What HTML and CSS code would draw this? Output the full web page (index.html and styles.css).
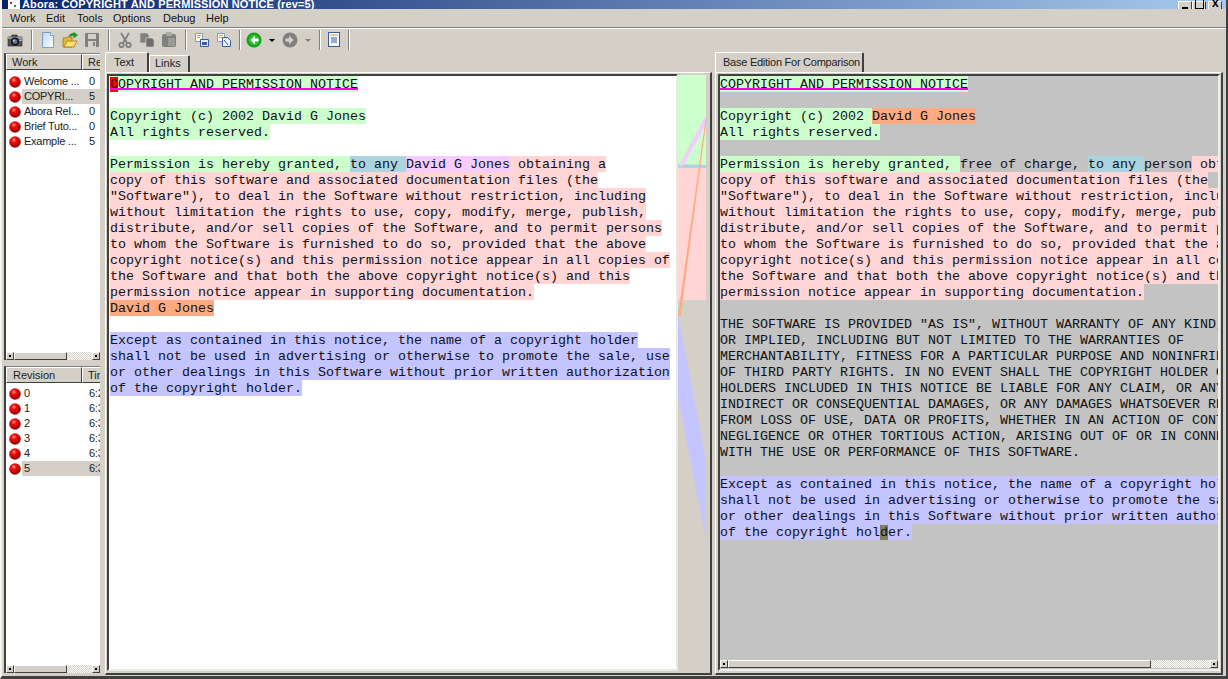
FILE: index.html
```html
<!DOCTYPE html>
<html lang="en">
<head>
  <meta charset="UTF-8">
  <title>Abora: COPYRIGHT AND PERMISSION NOTICE (rev=5)</title>
  <link rel="stylesheet" href="styles.css">
</head>
<body>
  <svg class="defs" width="0" height="0">
    <defs>
      <radialGradient id="ball" cx="0.4" cy="0.32" r="0.7">
        <stop offset="0" stop-color="#ff9a8a"/>
        <stop offset="0.3" stop-color="#f01010"/>
        <stop offset="0.8" stop-color="#b00000"/>
        <stop offset="1" stop-color="#5a2020"/>
      </radialGradient>
      <linearGradient id="page" x1="0" y1="0" x2="1" y2="1">
        <stop offset="0" stop-color="#b8d4f8"/>
        <stop offset="0.6" stop-color="#e4effc"/>
        <stop offset="1" stop-color="#fff"/>
      </linearGradient>
      <symbol id="dot" viewBox="0 0 12 12"><circle cx="6" cy="6" r="5.8" fill="url(#ball)"/></symbol>
    </defs>
  </svg>
  <div class="window">
    <div class="titlebar">
      <svg class="app-icon" width="12" height="9" viewBox="0 0 12 9"><rect width="12" height="9" fill="#fff"/><rect x="2" y="2" width="2" height="2" fill="#e02020"/><rect x="6" y="5" width="2" height="2" fill="#20a020"/></svg>
      <span class="title-text">Abora: COPYRIGHT AND PERMISSION NOTICE (rev=5)</span>
      <div class="win-btns">
        <span class="win-btn"><i class="min"></i></span>
        <span class="win-btn"><i class="max"></i></span>
        <span class="win-btn close"><i class="x">x</i></span>
      </div>
    </div>

    <div class="menubar">
      <span>Work</span><span>Edit</span><span>Tools</span><span>Options</span><span>Debug</span><span>Help</span>
    </div>

    <div class="toolbar">
      <svg class="tb first" width="16" height="16" viewBox="0 0 16 16"><path d="M1 5h3l1-2h5l1 2h4v9H1z" fill="#555" stroke="#222" stroke-width=".6"/><rect x="1" y="5" width="14" height="2" fill="#999"/><circle cx="8" cy="9.500" r="4" fill="#111"/><circle cx="8" cy="9.500" r="2.500" fill="#5a6ea0"/><circle cx="7" cy="8.500" r="1" fill="#cfd8f0"/><rect x="12.500" y="7.500" width="2" height="1.500" fill="#ddd"/></svg>
      <i class="sep"></i>
      <svg class="tb" width="16" height="16" viewBox="0 0 16 16"><path d="M2.500.5h8l3 3v12h-11z" fill="url(#page)" stroke="#7f9db9"/><path d="M10.500.5v3h3" fill="#fff" stroke="#7f9db9"/></svg>
      <svg class="tb gap" width="16" height="16" viewBox="0 0 16 16"><path d="M1 6h3l1-1h5v10H1z" fill="#e8b830" stroke="#a07810" stroke-width=".8"/><path d="M2 15l3-6h10l-3 6z" fill="#f8e070" stroke="#a07810" stroke-width=".8"/><path d="M7 5c0-3 2-4 4.500-4V-.2L16 3l-4.500 3.500V4C10 4 8 4 7 5z" fill="#1a9a2a"/></svg>
      <svg class="tb gap" width="16" height="16" viewBox="0 0 16 16"><rect x="1" y="1" width="14" height="14" rx="1" fill="#808080"/><rect x="4" y="2" width="8" height="5" fill="#d4d0c8"/><rect x="4" y="9" width="8" height="6" fill="#d4d0c8"/><rect x="9" y="10" width="2" height="4" fill="#808080"/></svg>
      <i class="sep"></i>
      <svg class="tb" width="16" height="16" viewBox="0 0 16 16"><g fill="none" stroke="#808080" stroke-width="1.800"><path d="M4 1l6 10M12 1L6 11"/><circle cx="4.500" cy="13" r="2.200"/><circle cx="11.500" cy="13" r="2.200"/></g></svg>
      <svg class="tb gap" width="16" height="16" viewBox="0 0 16 16"><path d="M1 1h7l2 2v3H7v5H1z" fill="#808080" stroke="#d4d0c8" stroke-width=".6"/><path d="M7 6h6l2 2v7H7z" fill="#6e6e6e" stroke="#d4d0c8" stroke-width=".6"/></svg>
      <svg class="tb gap" width="16" height="16" viewBox="0 0 16 16"><rect x="1" y="2" width="14" height="13" rx="2" fill="#808080"/><rect x="5" y="0" width="6" height="4" rx="1" fill="#a8a8a8"/><rect x="7" y="6" width="7" height="8" fill="#9a9a9a"/></svg>
      <i class="sep"></i>
      <svg class="tb" width="16" height="16" viewBox="0 0 16 16"><path d="M1.500 1.500h7v8h-7z" fill="#fff" stroke="#7f9db9"/><path d="M3 3.500h4M3 5.500h3" stroke="#d4a030"/><path d="M6.500 7.500h8v7h-8z" fill="#dce8f8" stroke="#3c5a98"/><path d="M8 10h5v3H8z" fill="#3c5a98"/></svg>
      <svg class="tb gap" width="16" height="16" viewBox="0 0 16 16"><path d="M1.500 1.500h7v8h-7z" fill="#fff" stroke="#7f9db9"/><path d="M3 3.500h4M3 5.500h3" stroke="#d4a030"/><path d="M6.500 5.500h5l3 3v6h-8z" fill="#eef2fa" stroke="#3c5a98"/><path d="M8 8l4 5" stroke="#3c5a98"/></svg>
      <i class="sep tight"></i>
      <svg class="tb" width="16" height="16" viewBox="0 0 16 16"><circle cx="8" cy="8" r="7.500" fill="#12a012"/><circle cx="8" cy="8" r="5.500" fill="#28c028"/><path d="M9 3.500 4.500 8 9 12.500V9.500h3.500v-3H9z" fill="#fff"/></svg>
      <i class="drop"></i>
      <svg class="tb" width="16" height="16" viewBox="0 0 16 16"><circle cx="8" cy="8" r="7.500" fill="#808080"/><path d="M7 3.500 11.500 8 7 12.500V9.500H3.500v-3H7z" fill="#d4d0c8"/></svg>
      <i class="drop off"></i>
      <i class="sep"></i>
      <svg class="tb" width="12" height="15" viewBox="0 0 12 15"><rect x=".5" y=".5" width="11" height="14" fill="#f8f8ff" stroke="#3c5a98"/><path d="M2 3h8" stroke="#d4a030"/><path d="M3 6h6M3 8h6M3 10h6" stroke="#3c5a98"/></svg>
      <i class="sep"></i>
    </div>

    <div class="main">
      <div class="sidebar">
        <div class="list list-top">
          <div class="list-head">
            <span class="hd first">Work</span><span class="hd">Re</span>
          </div>
          <div class="list-body">
            <div class="row"><svg class="ball"><use href="#dot"/></svg><span class="name">Welcome ...</span><span class="val">0</span></div>
            <div class="row sel"><svg class="ball"><use href="#dot"/></svg><span class="name">COPYRI...</span><span class="val">5</span></div>
            <div class="row"><svg class="ball"><use href="#dot"/></svg><span class="name">Abora Rel...</span><span class="val">0</span></div>
            <div class="row"><svg class="ball"><use href="#dot"/></svg><span class="name">Brief Tuto...</span><span class="val">0</span></div>
            <div class="row"><svg class="ball"><use href="#dot"/></svg><span class="name">Example ...</span><span class="val">5</span></div>
          </div>
          <div class="hscroll"><i class="sb-btn"></i><i class="sb-thumb small"></i><i class="sb-track"></i><i class="sb-btn"></i></div>
        </div>
        <div class="list list-bottom">
          <div class="list-head">
            <span class="hd first rev">Revision</span><span class="hd">Tir</span>
          </div>
          <div class="list-body">
            <div class="row"><svg class="ball"><use href="#dot"/></svg><span class="name">0</span><span class="val">6:2</span></div>
            <div class="row"><svg class="ball"><use href="#dot"/></svg><span class="name">1</span><span class="val">6:3</span></div>
            <div class="row"><svg class="ball"><use href="#dot"/></svg><span class="name">2</span><span class="val">6:3</span></div>
            <div class="row"><svg class="ball"><use href="#dot"/></svg><span class="name">3</span><span class="val">6:3</span></div>
            <div class="row"><svg class="ball"><use href="#dot"/></svg><span class="name">4</span><span class="val">6:3</span></div>
            <div class="row sel"><svg class="ball"><use href="#dot"/></svg><span class="name">5</span><span class="val">6:3</span></div>
          </div>
          <div class="hscroll"><i class="sb-btn"></i><i class="sb-thumb small"></i><i class="sb-track"></i><i class="sb-btn"></i></div>
        </div>
      </div>

      <div class="pane pane-left">
        <div class="tabs">
          <span class="tab active">Text</span><span class="tab">Links</span>
        </div>
        <div class="tab-frame">
          <div class="doc-text white">
            <div class="line"><span class="ins head"><b class="cursor">C</b>OPYRIGHT AND PERMISSION NOTICE</span></div>
            <div class="line"></div>
            <div class="line"><span class="ins">Copyright (c) 2002 David G Jones</span></div>
            <div class="line"><span class="ins">All rights reserved.</span></div>
            <div class="line"></div>
            <div class="line"><span class="ins">Permission is hereby granted, </span><span class="teal">to any </span><span class="violet">David G Jones</span><span class="pink"> obtaining a</span></div>
            <div class="line"><span class="pink">copy of this software and associated documentation files (the</span></div>
            <div class="line"><span class="pink">"Software"), to deal in the Software without restriction, including</span></div>
            <div class="line"><span class="pink">without limitation the rights to use, copy, modify, merge, publish,</span></div>
            <div class="line"><span class="pink">distribute, and/or sell copies of the Software, and to permit persons</span></div>
            <div class="line"><span class="pink">to whom the Software is furnished to do so, provided that the above</span></div>
            <div class="line"><span class="pink">copyright notice(s) and this permission notice appear in all copies of</span></div>
            <div class="line"><span class="pink">the Software and that both the above copyright notice(s) and this</span></div>
            <div class="line"><span class="pink">permission notice appear in supporting documentation.</span></div>
            <div class="line"><span class="orange">David G Jones</span></div>
            <div class="line"></div>
            <div class="line"><span class="blue">Except as contained in this notice, the name of a copyright holder</span></div>
            <div class="line"><span class="blue">shall not be used in advertising or otherwise to promote the sale, use</span></div>
            <div class="line"><span class="blue">or other dealings in this Software without prior written authorization</span></div>
            <div class="line"><span class="blue">of the copyright holder.</span></div>
          </div>
          <svg class="overview" width="28" height="597" viewBox="678 74 28 597">
            <rect x="678" y="75" width="28" height="90" fill="#ccffcc"/>
            <rect x="678" y="168" width="28" height="132" fill="#ffd5d5"/>
            <polygon points="678,164 706,165 706,168 678,167" fill="#aad5e0"/>
            <polygon points="679,166 704,118 706,118 706,124 683,166" fill="#f4ccff"/>
            <polygon points="678,316 680.500,316 706,124 706,116" fill="#ffaa80"/>
            <polygon points="678,315 706,460 706,540 678,397" fill="#c4c4ff"/>
          </svg>
        </div>
      </div>

      <div class="pane pane-right">
        <div class="tabs">
          <span class="tab active wide">Base Edition For Comparison</span>
        </div>
        <div class="tab-frame">
          <div class="right-inner">
            <div class="doc-text grey">
              <div class="line"><span class="ins head">COPYRIGHT AND PERMISSION NOTICE</span></div>
              <div class="line"></div>
              <div class="line"><span class="ins">Copyright (c) 2002 </span><span class="orange">David G Jones</span></div>
              <div class="line"><span class="ins">All rights reserved.</span></div>
              <div class="line"></div>
              <div class="line"><span class="ins">Permission is hereby granted, </span><span>free of charge, </span><span class="teal">to any </span><span>person</span><span class="pink"> obtaining a</span></div>
              <div class="line"><span class="pink">copy of this software and associated documentation files (the</span></div>
              <div class="line"><span class="pink">"Software"), to deal in the Software without restriction, including</span></div>
              <div class="line"><span class="pink">without limitation the rights to use, copy, modify, merge, publish,</span></div>
              <div class="line"><span class="pink">distribute, and/or sell copies of the Software, and to permit persons</span></div>
              <div class="line"><span class="pink">to whom the Software is furnished to do so, provided that the above</span></div>
              <div class="line"><span class="pink">copyright notice(s) and this permission notice appear in all copies of</span></div>
              <div class="line"><span class="pink">the Software and that both the above copyright notice(s) and this</span></div>
              <div class="line"><span class="pink">permission notice appear in supporting documentation.</span></div>
              <div class="line"></div>
              <div class="line">THE SOFTWARE IS PROVIDED "AS IS", WITHOUT WARRANTY OF ANY KIND, EXPRESS</div>
              <div class="line">OR IMPLIED, INCLUDING BUT NOT LIMITED TO THE WARRANTIES OF</div>
              <div class="line">MERCHANTABILITY, FITNESS FOR A PARTICULAR PURPOSE AND NONINFRINGEMENT</div>
              <div class="line">OF THIRD PARTY RIGHTS. IN NO EVENT SHALL THE COPYRIGHT HOLDER OR</div>
              <div class="line">HOLDERS INCLUDED IN THIS NOTICE BE LIABLE FOR ANY CLAIM, OR ANY SPECIAL</div>
              <div class="line">INDIRECT OR CONSEQUENTIAL DAMAGES, OR ANY DAMAGES WHATSOEVER RESULTING</div>
              <div class="line">FROM LOSS OF USE, DATA OR PROFITS, WHETHER IN AN ACTION OF CONTRACT,</div>
              <div class="line">NEGLIGENCE OR OTHER TORTIOUS ACTION, ARISING OUT OF OR IN CONNECTION</div>
              <div class="line">WITH THE USE OR PERFORMANCE OF THIS SOFTWARE.</div>
              <div class="line"></div>
              <div class="line"><span class="blue">Except as contained in this notice, the name of a copyright holder</span></div>
              <div class="line"><span class="blue">shall not be used in advertising or otherwise to promote the sale, use</span></div>
              <div class="line"><span class="blue">or other dealings in this Software without prior written authorization</span></div>
              <div class="line"><span class="blue">of the copyright hol<b class="caret">d</b>er.</span></div>
            </div>
            <div class="hscroll wide-scroll"><i class="sb-btn"></i><i class="sb-thumb long"></i><i class="sb-track"></i><i class="sb-btn"></i></div>
          </div>
        </div>
      </div>
    </div>
  </div>
</body>
</html>
```

FILE: styles.css
```css
* {
  box-sizing: border-box;
}

html, body {
  margin: 0;
  padding: 0;
  overflow: hidden;
}

body {
  font-family: "Liberation Sans", Arial, sans-serif;
  font-size: 11px;
  color: #000;
  background: #d4d0c8;
}

.defs {
  position: absolute;
}

.window {
  width: 1228px;
  height: 679px;
  display: flex;
  flex-direction: column;
  background: #d4d0c8;
  overflow: hidden;
  border-left: 2px solid #f4f3ef;
  border-right: 2px solid #404040;
  border-bottom: 3px solid #404040;
}

/* title bar is cut by the top of the shot */
.titlebar {
  height: 9px;
  flex: none;
  display: flex;
  align-items: flex-end;
  overflow: hidden;
  padding-left: 6px;
  background: linear-gradient(to right, #0a246a, #a6caf0);
}

.app-icon {
  flex: none;
}

.title-text {
  margin-left: 2px;
  color: #fff;
  font-weight: bold;
  font-size: 11px;
  letter-spacing: 0.13px;
  line-height: 14px;
  height: 14px;
  margin-bottom: -2px;
  white-space: nowrap;
}

.win-btns {
  margin-left: auto;
  margin-right: 4px;
  display: flex;
  align-items: flex-end;
}

.win-btn {
  width: 14px;
  height: 14px;
  margin-bottom: -6px;
  background: #d4d0c8;
  border: 1px solid;
  border-color: #fff #404040 #404040 #fff;
  position: relative;
  display: block;
}

.win-btn.close {
  margin-left: 2px;
}

.min {
  position: absolute;
  left: 3px;
  top: 5px;
  width: 6px;
  height: 2px;
  background: #000;
}

.max {
  position: absolute;
  left: 2px;
  top: -4px;
  width: 9px;
  height: 11px;
  border: 1px solid #000;
}

.x {
  position: absolute;
  left: 3px;
  top: -5px;
  font-style: normal;
  font-weight: bold;
  font-size: 12px;
  line-height: 12px;
}

.menubar {
  height: 18px;
  flex: none;
  display: flex;
  align-items: center;
  padding-left: 8px;
  font-size: 11px;
  color: #111;
}

.menubar span:nth-child(1) { width: 36px; }
.menubar span:nth-child(2) { width: 31px; }
.menubar span:nth-child(3) { width: 36px; }
.menubar span:nth-child(4) { width: 50px; }
.menubar span:nth-child(5) { width: 43px; }

.toolbar {
  height: 25px;
  flex: none;
  display: flex;
  align-items: center;
  border-top: 1px solid #808080;
  box-shadow: inset 0 1px 0 #fff;
  padding-bottom: 1px;
}

.tb {
  flex: none;
  display: block;
}

.tb.first {
  margin-left: 5px;
}

.tb.gap {
  margin-left: 6px;
}

.sep {
  flex: none;
  width: 2px;
  height: 20px;
  margin: 0 7px 0 8px;
  border-left: 1px solid #808080;
  border-right: 1px solid #fff;
}

.sep.tight {
  margin: 0 5px 0 7px;
}

.drop {
  flex: none;
  width: 6px;
  height: 0;
  margin: 2px 7px 0 7px;
  border-left: 3px solid transparent;
  border-right: 3px solid transparent;
  border-top: 3px solid #000;
}

.drop.off {
  border-top-color: #808080;
  margin-right: 0;
}

.main {
  flex: 1;
  min-height: 0;
  display: flex;
  padding: 0 3px 1px 2px;
}

/* sidebar lists */
.sidebar {
  width: 96px;
  flex: none;
  display: flex;
  flex-direction: column;
  padding-top: 1px;
}

.list {
  display: flex;
  flex-direction: column;
  flex: none;
  height: 307px;
  border-left: 2px solid #404040;
  border-top: 1px solid #808080;
  background: #fff;
  overflow: hidden;
}

.list-bottom {
  margin-top: 6px;
}

.list-head {
  height: 16px;
  flex: none;
  display: flex;
  background: #d4d0c8;
}

.hd {
  padding-left: 5px;
  line-height: 14px;
  font-size: 11px;
  color: #222;
  white-space: nowrap;
  overflow: hidden;
  flex: 1;
  border: 1px solid;
  border-color: #fff #404040 #404040 #fff;
  border-right: 0;
}

.hd.first {
  flex: none;
  width: 76px;
  border-right: 1px solid #404040;
}

.hd.rev {
  padding-left: 6px;
}

.list-body {
  flex: 1;
  min-height: 0;
  padding-top: 4px;
}

.list-bottom .list-body {
  padding-top: 3px;
}

.row {
  height: 15px;
  display: flex;
  align-items: center;
  padding-left: 3px;
  font-size: 11px;
  letter-spacing: -0.25px;
  color: #222;
  white-space: nowrap;
  overflow: hidden;
}

.ball {
  flex: none;
  width: 12px;
  height: 12px;
  margin-right: 1px;
}

.name {
  flex: none;
  width: 65px;
  padding-left: 2px;
  height: 15px;
  line-height: 15px;
  overflow: hidden;
}

.val {
  flex: 1;
  height: 15px;
  line-height: 15px;
  padding-left: 2px;
}

.row.sel .name,
.row.sel .val {
  background: #d4d0c8;
}

/* scrollbars with a very low height, arrows squash to a dot */
.hscroll {
  height: 8px;
  flex: none;
  display: flex;
  background: #d4d0c8;
}

.sb-btn {
  width: 8px;
  flex: none;
  background: radial-gradient(circle at center, #000 0 1px, transparent 1.5px), #d4d0c8;
  border: 1px solid;
  border-color: #fff #404040 #404040 #fff;
}

.sb-thumb {
  flex: none;
  background: #d4d0c8;
  border: 1px solid;
  border-color: #fff #404040 #404040 #fff;
}

.sb-thumb.small {
  width: 53px;
}

.sb-thumb.long {
  width: 423px;
}

.sb-track {
  flex: 1;
  background-color: #fff;
  background-image: conic-gradient(#d4d0c8 25%, #fff 0 50%, #d4d0c8 0 75%, #fff 0);
  background-size: 2px 2px;
}

/* tab panes */
.pane {
  display: flex;
  flex-direction: column;
}

.pane-left {
  width: 607px;
  flex: none;
  margin-left: 5px;
}

.pane-right {
  flex: 1;
  min-width: 0;
  margin-left: 3px;
}

.tabs {
  height: 20px;
  flex: none;
  display: flex;
  align-items: flex-end;
}

.tab {
  height: 17px;
  width: 41px;
  padding-left: 5px;
  line-height: 15px;
  font-size: 11px;
  color: #222;
  white-space: nowrap;
  border: 1px solid;
  border-color: #fff #404040 transparent #fff;
  border-width: 1px 2px 0 1px;
  border-radius: 2px 2px 0 0;
}

.tab.active {
  height: 20px;
  width: 44px;
  padding-left: 8px;
  line-height: 18px;
}

.tab.wide {
  width: 149px;
  padding-left: 7px;
  letter-spacing: -0.25px;
}

.tab-frame {
  flex: 1;
  min-height: 0;
  display: flex;
  padding: 1px 4px 2px 1px;
  border: solid;
  border-width: 1px 2px 2px 1px;
  border-color: #fff #404040 #404040 #fff;
}

.pane-right .tab-frame {
  padding-left: 2px;
  padding-right: 1px;
}

.doc-text {
  font-family: "Liberation Mono", "Courier New", monospace;
  font-size: 13.333px;
  color: #111;
  overflow: hidden;
}

.doc-text.white {
  width: 571px;
  flex: none;
  padding-left: 1px;
  background: #fff;
  border: solid;
  border-width: 2px 2px 2px 2px;
  border-color: #404040 #e8e8e4 #e8e8e4 #404040;
}

.right-inner {
  flex: 1;
  min-width: 0;
  display: flex;
  flex-direction: column;
  border: solid;
  border-width: 2px 2px 2px 2px;
  border-color: #404040 #eeeeea #eeeeea #404040;
  background: #c3c3c3;
}

.doc-text.grey {
  flex: 1;
  min-height: 0;
}

.wide-scroll {
  margin-bottom: 1px;
}

/* line-height above the row height sets the glyphs one pixel lower */
.line {
  height: 16px;
  line-height: 18px;
  white-space: pre;
}

.line span {
  display: inline-block;
  height: 16px;
  vertical-align: top;
}

.ins { background: #ccffcc; }
.line .pink { background: #ffd5d5; }
.orange { background: #ffaa80; }
.blue { background: #c4c4ff; }
.teal { background: #aad5e0; }
.violet { background: #f4ccff; }

.head {
  position: relative;
}

.head::after {
  content: "";
  position: absolute;
  left: 0;
  right: 0;
  top: 12px;
  height: 2px;
  background: #ff00e6;
}

.cursor {
  font-weight: normal;
  background: #ff0000;
}

.caret {
  font-weight: normal;
  background: #808060;
}

.overview {
  flex: none;
  display: block;
}
```
